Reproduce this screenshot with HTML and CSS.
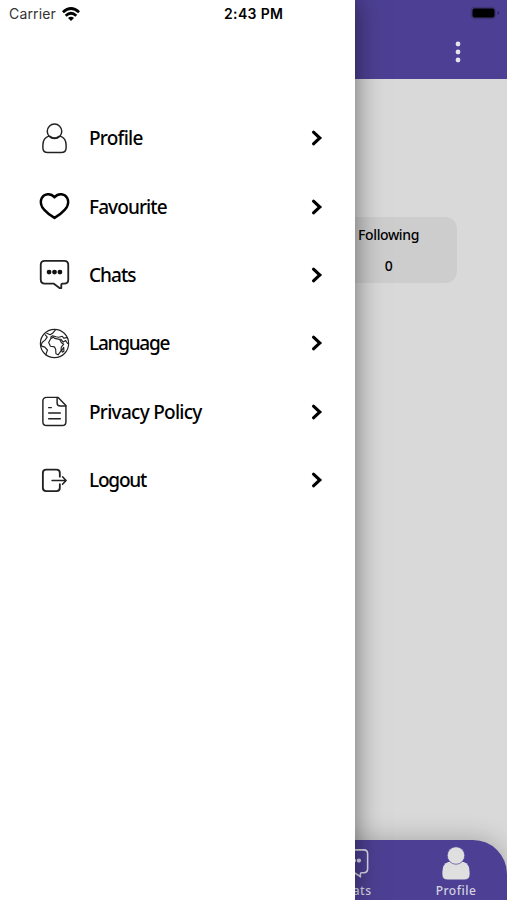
FILE: index.html
```html
<!DOCTYPE html>
<html lang="en">
<head>
<meta charset="utf-8">
<title>Profile menu</title>
<link rel="stylesheet" href="styles.css">
</head>
<body>
<div class="screen">
  <main class="app">
    <header class="app-bar">
      <svg class="battery" width="30" height="14" viewBox="0 0 30 14"><rect x=".8" y=".8" width="25" height="12.4" rx="4" fill="#403577"/><rect x="2.5" y="2.5" width="22" height="9" rx="2.2"/><path d="M27.5 5v4q1.8-.7 1.8-2t-1.8-2" fill="#30285d"/></svg>
      <svg class="more" width="6" height="22" viewBox="0 0 6 22" fill="#e5e3ed"><circle cx="3" cy="3" r="2.4"/><circle cx="3" cy="11" r="2.4"/><circle cx="3" cy="19" r="2.4"/></svg>
    </header>
    <section class="content">
      <div class="stat"><span>Following</span><span>0</span></div>
    </section>
    <nav class="tabs">
      <div class="tab chats-tab">
        <svg width="32" height="36" viewBox="0 0 32 36" fill="none" stroke="#dedbe8" stroke-width="1.6"><path d="M5 4h20q4 0 4 4v15.500q0 4-4 4h-2.500q-1 0-1 1.500v2.500l-6-4H5q-4 0-4-4V8q0-4 4-4z"/><g fill="#dedbe8" stroke="none"><circle cx="10" cy="15" r="2.200"/><circle cx="15" cy="15" r="2.200"/><circle cx="20" cy="15" r="2.200"/></g></svg>
        <span>Chats</span>
      </div>
      <div class="tab">
        <svg width="32" height="36" viewBox="0 0 32 36" fill="#dfdfe0"><path d="M8 16.500h16q6 2 6 10.500v2q0 5.500-5.500 5.500h-17Q2 34.500 2 29v-2q0-8.500 6-10.500z"/><circle cx="16" cy="9.800" r="9" stroke="#4d4094" stroke-width=".7"/></svg>
        <span>Profile</span>
      </div>
    </nav>
  </main>
  <aside class="drawer">
    <div class="status">
      <span class="carrier">Carrier</span>
      <svg width="18" height="14" viewBox="0 0 18 14" fill="none" stroke="#000" stroke-width="2.800"><path d="M.9 5.200q8.100-7.300 16.200 0M3.700 8.700q5.300-4.800 10.600 0"/><path d="M6 11Q9 8.500 12 11L9 14z" fill="#000" stroke="none"/></svg>
      <span class="time">2:43 PM</span>
    </div>
    <ul class="menu">
      <li class="item">
        <svg class="icon" viewBox="0 0 32 32"><circle cx="16" cy="8.600" r="7.500"/><path d="M10 13.500Q4 15.500 4 23v2.500q0 5 5 5h14q5 0 5-5V23q0-7.500-6-9.500M10 13.800h1.500q4.500 3.500 9 0H22"/></svg>
        <span class="label profile">Profile</span>
        <svg class="chevron" viewBox="0 0 12 16"><path d="M2.500 2.200 8.800 8l-6.300 5.800"/></svg>
      </li>
      <li class="item">
        <svg class="icon heart" viewBox="0 0 32 32"><path d="M16 6.500C12 1.800 5.500 2.700 3 7 .7 11.500 2.500 16.500 5.500 19.500q4 4.500 10.500 8.300Q22.500 24 26.500 19.500c3-3 4.800-8 2.500-12.500C26.500 2.700 20 1.800 16 6.500z"/></svg>
        <span class="label favourite">Favourite</span>
        <svg class="chevron" viewBox="0 0 12 16"><path d="M2.500 2.200 8.800 8l-6.300 5.800"/></svg>
      </li>
      <li class="item">
        <svg class="icon chat" viewBox="0 0 32 32"><path d="M6 2h20q4.200 0 4.200 4.200v15.200q0 4-4 4h-2q-1.200 0-1.200 1.500v3l-1.500.2-6.500-4.700H6q-4.200 0-4.200-4.200V6.200Q1.800 2 6 2z"/><g class="solid"><circle cx="10.400" cy="13.500" r="2.500"/><circle cx="16" cy="13.500" r="2.500"/><circle cx="21.600" cy="13.500" r="2.500"/></g></svg>
        <span class="label chats">Chats</span>
        <svg class="chevron" viewBox="0 0 12 16"><path d="M2.500 2.200 8.800 8l-6.300 5.800"/></svg>
      </li>
      <li class="item">
        <svg class="icon globe" viewBox="0 0 32 32"><circle cx="16" cy="16" r="14.600"/><path d="M6.500 7l2 2.500-2.300 3-3 2.500-1 3M8 5.500l3.500 1.500 2.500-1.500 3-3.500M2 18.500l4 1.200 2.700 3-1.700 5M12 11l-2 4 1.800 3.800 4.200.7 1.200 2.500.3 4.500 2.200 1.200 3-4 .3-4 2.500-3-2.300-1.500-2-3.500-5-1-1.500-1.200zM12 9.500l2-1.500 3.500 1 3 .5 3.500-1 1.500 2 3.500-.5M22.500 11.500l2.500 3 2.500-1.500 2 3M25.500 20l-2 3 .5 2 1.700-1z"/></svg>
        <span class="label language">Language</span>
        <svg class="chevron" viewBox="0 0 12 16"><path d="M2.500 2.200 8.800 8l-6.300 5.800"/></svg>
      </li>
      <li class="item">
        <svg class="icon" viewBox="0 0 32 32"><path d="M8 1.400h11.500l8.300 8.300V26.500q0 4-4 4H8q-4 0-4-4V5.400q0-4 4-4z"/><path d="M18.700 1.600v5.500q0 3.200 3.200 3.200h5.600M10 12h2.700M10 17.600h12M10 23.400h12"/></svg>
        <span class="label privacy">Privacy Policy</span>
        <svg class="chevron" viewBox="0 0 12 16"><path d="M2.500 2.200 8.800 8l-6.300 5.800"/></svg>
      </li>
      <li class="item">
        <svg class="icon chat" viewBox="0 0 32 32"><path d="M21.500 12V8.200q0-3.500-3.500-3.500H7.500Q4 4.700 4 8.200v15.300Q4 27 7.500 27H18q3.500 0 3.500-3.500v-3.700"/><path class="arrow" d="M13.500 16H28M24.300 12.200 28 16l-3.700 3.800"/></svg>
        <span class="label logout">Logout</span>
        <svg class="chevron" viewBox="0 0 12 16"><path d="M2.500 2.200 8.800 8l-6.300 5.800"/></svg>
      </li>
    </ul>
  </aside>
</div>
</body>
</html>
```

FILE: styles.css
```css
* { box-sizing: border-box; }
body { margin: 0; }
.screen { position: relative; height: 900px; overflow: hidden; font-family: "Noto Sans", sans-serif; color: #000; }
.app { display: flex; flex-direction: column; height: 900px; background: #d9d9d9; }
.app-bar { height: 79px; background: #4d4094; display: flex; flex-direction: column; align-items: flex-end; padding: 6px 7px 0 0; }
.battery { display: block; }
.more { display: block; margin: 21px 39px 0 0; }
.content { flex: 1; display: flex; align-items: flex-start; justify-content: flex-end; padding: 138px 50px 0 0; }
.stat { width: 137px; height: 66px; border-radius: 12px; background: #cdcdcd; display: flex; flex-direction: column; gap: 11px; align-items: center; padding-top: 8px; font-size: 14px; line-height: 20px; font-weight: 500; letter-spacing: -.38px; }
.tabs { height: 60px; background: #4d4094; border-radius: 0 34px 0 0; display: flex; justify-content: flex-end; box-shadow: 0 -2px 24px rgba(0,0,0,.22); }
.tab { width: 102px; padding-top: 6px; display: flex; flex-direction: column; align-items: center; font-size: 12px; line-height: 19px; font-weight: 500; letter-spacing: .5px; color: #d5d2e0; }
.tab svg { display: block; }
.chats-tab svg { margin-left: 2px; }
.drawer { position: absolute; inset: 0 auto 0 0; width: 355px; background: #fff; box-shadow: 0 0 26px rgba(0,0,0,.5); }
.status { display: flex; align-items: center; height: 27px; padding-left: 9px; font-family: Inter, sans-serif; font-size: 14px; }
.carrier { width: 53px; color: #333; letter-spacing: .15px; }
.time { margin-left: 144px; font-size: 14px; font-weight: 600; letter-spacing: .35px; white-space: nowrap; }
.menu { list-style: none; margin: 0; padding: 77px 32px 0 39px; }
.item { height: 68.400px; display: flex; align-items: center; }
.icon { width: 31px; height: 31px; fill: none; stroke: #222; stroke-width: 1.500; stroke-linejoin: round; stroke-linecap: round; }
.heart { stroke: #000; stroke-width: 2.600; }
.chat { stroke-width: 1.900; }
.arrow { stroke-width: 1.600; }
.globe { stroke-width: 1.200; }
.solid { fill: #111; stroke: none; }
.label { flex: 1; margin-left: 19px; font-size: 19px; font-weight: 500; line-height: 28px; white-space: nowrap; }
.profile { letter-spacing: -.75px; }
.favourite { letter-spacing: -.9px; }
.chats { letter-spacing: -.95px; }
.language { letter-spacing: -1.250px; }
.privacy { letter-spacing: -.72px; }
.logout { letter-spacing: -1.200px; }
.chevron { width: 12px; height: 16px; fill: none; stroke: #000; stroke-width: 3.100; stroke-linecap: round; }
```
